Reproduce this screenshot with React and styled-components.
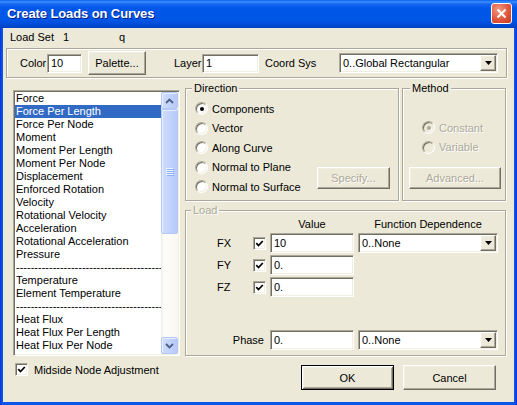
import styled, { createGlobalStyle, css } from 'styled-components';

const FACE = '#ECE9D8';
const GRAY = '#ACA899';

const GlobalStyle = createGlobalStyle`
  * { box-sizing: border-box; }
  html, body { margin: 0; padding: 0; background: #fff; }
  body {
    font-family: "Liberation Sans", Arial, sans-serif;
    font-size: 11px;
    color: #000;
  }
`;

const sunken = css`
  border: 1px solid;
  border-color: ${GRAY} #fff #fff ${GRAY};
  box-shadow: inset 1px 1px 0 #716F64, inset -1px -1px 0 #F1EFE2;
`;

const raised = css`
  border: 1px solid;
  border-color: #fff #716F64 #716F64 #fff;
  box-shadow: inset -1px -1px 0 ${GRAY}, inset 1px 1px 0 #F1EFE2;
  background: ${FACE};
`;

const etched = css`
  border: 1px solid ${GRAY};
  box-shadow: inset 1px 1px 0 #fff, 1px 1px 0 #fff;
`;

const disabledText = css`
  color: ${GRAY};
  text-shadow: 1px 1px 0 #fff;
`;

const Window = styled.div`
  width: 517px;
  height: 405px;
  display: flex;
  flex-direction: column;
  background: linear-gradient(to right, #0831D9, #0B55E8 2px, #0B55E8 calc(100% - 2px), #0831D9);
`;

const TitleBar = styled.div`
  height: 28px;
  flex: none;
  display: flex;
  align-items: center;
  justify-content: space-between;
  padding: 0 5px 1px 7px;
  background: linear-gradient(to bottom, #0A5DF6 0%, #3D8FFA 7%, #1466F2 14%, #0058E8 30%, #0056E6 70%, #004CD6 88%, #003EBE 100%);
  color: #fff;
  font: bold 13px "Liberation Sans", Arial, sans-serif;
  letter-spacing: -0.1px;
  text-shadow: 1px 1px 0 #0A1E82;
`;

const CloseButton = styled.div`
  width: 21px;
  height: 21px;
  border: 1px solid #fff;
  border-radius: 3px;
  background: radial-gradient(circle at 35% 30%, #F09A83 0%, #E0563C 55%, #C8391E 100%);
  display: flex;
  align-items: center;
  justify-content: center;
`;

const Client = styled.div`
  flex: 1;
  margin: 0 3px 3px;
  padding-top: 1px;
  background: ${FACE};
  display: flex;
  flex-direction: column;
`;

const LoadSetRow = styled.div`
  height: 15px;
  padding-left: 7px;
  display: flex;
  align-items: center;
`;

const Cell = styled.span`
  width: ${({ $w }) => ($w ? `${$w}px` : 'auto')};
  flex: none;
  white-space: nowrap;
`;

const ToolGroup = styled.div`
  ${etched};
  margin: 4px 0 0 3px;
  width: 501px;
  height: 30px;
  display: flex;
  align-items: center;
  padding-left: 13px;
`;

const FieldLabel = styled.span`
  width: ${({ $w }) => $w}px;
  margin-left: ${({ $ml }) => $ml || 0}px;
  flex: none;
  white-space: nowrap;
`;

const TextInput = styled.input`
  ${sunken};
  width: ${({ $w }) => $w}px;
  height: ${({ $h }) => $h || 20}px;
  padding: 0 2px 0 3px;
  margin: 0;
  background: #fff;
  font: 11px "Liberation Sans", Arial, sans-serif;
  color: #000;
  outline: none;
`;

const Button = styled.div`
  ${raised};
  width: ${({ $w }) => $w}px;
  height: ${({ $h }) => $h || 23}px;
  margin-left: ${({ $ml }) => $ml || 0}px;
  flex: none;
  display: flex;
  align-items: center;
  justify-content: center;
  ${({ $disabled }) => $disabled && disabledText};
  ${({ $default }) =>
    $default &&
    css`
      border: 1px solid #000;
      box-shadow: inset 1px 1px 0 #fff, inset -1px -1px 0 #716F64, inset 2px 2px 0 #F1EFE2,
        inset -2px -2px 0 ${GRAY};
    `};
`;

const Combo = styled.div`
  ${sunken};
  width: ${({ $w }) => $w}px;
  height: 20px;
  padding: 1px;
  background: #fff;
  display: flex;
  align-items: center;
  flex: none;
`;

const ComboText = styled.span`
  flex: 1;
  padding-left: 2px;
  white-space: nowrap;
  overflow: hidden;
`;

const ComboArrow = styled.div`
  ${raised};
  width: 16px;
  height: 16px;
  display: flex;
  align-items: center;
  justify-content: center;
`;

const Main = styled.div`
  display: flex;
  gap: 5px;
  margin: 10px 0 0 10px;
`;

const LeftColumn = styled.div`
  width: 167px;
  padding-top: 2px;
  display: flex;
  flex-direction: column;
`;

const ListBox = styled.div`
  ${sunken};
  height: 266px;
  padding: 1px;
  background: #fff;
  display: flex;
`;

const Items = styled.div`
  flex: 1;
  overflow: hidden;
`;

const Item = styled.div`
  height: 13px;
  line-height: 13px;
  padding-left: 1px;
  white-space: nowrap;
  overflow: hidden;
  ${({ $selected }) =>
    $selected &&
    css`
      background: #316AC5;
      color: #fff;
    `};
`;

const Scrollbar = styled.div`
  width: 17px;
  display: flex;
  flex-direction: column;
  background: linear-gradient(to right, #EEEDE5, #FDFDFA 3px, #F8F7F2);
`;

const scrollPart = css`
  border: 1px solid #B4C8F6;
  border-radius: 2px;
  background: linear-gradient(to right, #CFDCFD, #C0D1FC 60%, #B5C8F7);
  box-shadow: inset 1px 1px 0 #E6EEFE;
`;

const ScrollButton = styled.div`
  ${scrollPart};
  height: 17px;
  flex: none;
  display: flex;
  align-items: center;
  justify-content: center;
`;

const Thumb = styled.div`
  ${scrollPart};
  height: 125px;
  flex: none;
  display: flex;
  flex-direction: column;
  align-items: center;
  justify-content: center;
  gap: 1px;
`;

const Grip = styled.div`
  width: 7px;
  height: 1px;
  background: #EEF4FE;
  box-shadow: 1px 1px 0 #8CB0F8;
`;

const Track = styled.div`
  flex: 1;
`;

const CheckRow = styled.div`
  display: flex;
  align-items: center;
  gap: 6px;
  margin: 7px 0 0 2px;
  white-space: nowrap;
`;

const CheckBox = styled.span`
  ${sunken};
  width: 13px;
  height: 13px;
  background: #fff;
  flex: none;
  display: flex;
  align-items: center;
  justify-content: center;
`;

const RightColumn = styled.div`
  width: 321px;
  display: flex;
  flex-direction: column;
`;

const TopGroups = styled.div`
  display: flex;
  gap: 3px;
`;

const GroupBox = styled.div`
  ${etched};
  position: relative;
  width: ${({ $w }) => ($w ? `${$w}px` : 'auto')};
  height: ${({ $h }) => $h}px;
  margin-top: ${({ $mt }) => $mt || 0}px;
  display: flex;
  flex-direction: ${({ $column }) => ($column ? 'column' : 'row')};
`;

const Caption = styled.span`
  position: absolute;
  top: -7px;
  left: ${({ $left }) => $left || 6}px;
  padding: 0 2px;
  line-height: 13px;
  background: ${FACE};
  ${({ $disabled }) => $disabled && disabledText};
`;

const DirectionBody = styled.div`
  flex: 1;
  display: flex;
  padding: 10px 8px 11px 9px;
`;

const RadioList = styled.div`
  display: flex;
  flex-direction: column;
`;

const RadioRow = styled.div`
  height: 19.5px;
  flex: none;
  display: flex;
  align-items: center;
  gap: 4px;
  padding-left: ${({ $indent }) => $indent || 0}px;
  white-space: nowrap;
  ${({ $disabled }) => $disabled && disabledText};
`;

const Radio = styled.span`
  width: 13px;
  height: 13px;
  border-radius: 50%;
  border: 1px solid;
  border-color: ${GRAY} #fff #fff ${GRAY};
  box-shadow: inset 1px 1px 0 #716F64, inset -1px -1px 0 #F1EFE2;
  background: ${({ $disabled }) => ($disabled ? FACE : '#fff')};
  flex: none;
  display: flex;
  align-items: center;
  justify-content: center;
  &::after {
    content: '';
    display: ${({ $checked }) => ($checked ? 'block' : 'none')};
    width: 4px;
    height: 4px;
    border-radius: 50%;
    background: ${({ $disabled }) => ($disabled ? GRAY : '#000')};
    box-shadow: ${({ $disabled }) => ($disabled ? '1px 1px 0 #fff' : 'none')};
  }
`;

const SideButton = styled(Button)`
  align-self: flex-end;
  margin-left: auto;
`;

const BottomButton = styled(Button)`
  margin-top: auto;
`;

const MethodBody = styled.div`
  flex: 1;
  display: flex;
  flex-direction: column;
  padding: 29px 0 11px 6px;
`;

const LoadBody = styled.div`
  flex: 1;
  display: flex;
  flex-direction: column;
  padding: 7px 0 5px;
`;

const LoadGrid = styled.div`
  display: grid;
  grid-template-columns: 63px 13px 84px 140px;
  grid-template-rows: ${({ $rows }) => $rows};
  column-gap: 4px;
  row-gap: 2px;
  align-items: center;
  margin-top: ${({ $pushDown }) => ($pushDown ? 'auto' : '0')};
`;

const Header = styled.span`
  grid-column: ${({ $col }) => $col};
  justify-self: center;
  line-height: 13px;
  white-space: nowrap;
`;

const AxisLabel = styled.span`
  grid-column: 1;
  justify-self: start;
  margin-left: 31px;
`;

const PhaseLabel = styled.span`
  grid-column: 1 / span 2;
  justify-self: end;
  margin-right: 2px;
`;

const ActionRow = styled.div`
  display: flex;
  justify-content: flex-end;
  gap: 9px;
  margin-top: 9px;
  padding-right: 10px;
`;

const CheckMark = () => (
  <svg width="9" height="9" viewBox="0 0 9 9">
    <path d="M1.3 4.2 L3.5 6.5 L7.8 2" fill="none" stroke="#000" strokeWidth="1.8" />
  </svg>
);

const DownTriangle = () => (
  <svg width="7" height="4" viewBox="0 0 7 4">
    <polygon points="0,0 7,0 3.5,4" fill="#000" />
  </svg>
);

const Chevron = ({ up }) => (
  <svg width="9" height="6" viewBox="0 0 9 6">
    <path
      d={up ? 'M1 5 L4.5 1.5 L8 5' : 'M1 1 L4.5 4.5 L8 1'}
      fill="none"
      stroke="#4D6185"
      strokeWidth="1.8"
    />
  </svg>
);

const SEP = '-'.repeat(60);

const loadTypes = [
  'Force',
  'Force Per Length',
  'Force Per Node',
  'Moment',
  'Moment Per Length',
  'Moment Per Node',
  'Displacement',
  'Enforced Rotation',
  'Velocity',
  'Rotational Velocity',
  'Acceleration',
  'Rotational Acceleration',
  'Pressure',
  SEP,
  'Temperature',
  'Element Temperature',
  SEP,
  'Heat Flux',
  'Heat Flux Per Length',
  'Heat Flux Per Node',
  'Heat Generation',
];

const directions = ['Components', 'Vector', 'Along Curve', 'Normal to Plane', 'Normal to Surface'];

function ComboBox({ width, value }) {
  return (
    <Combo $w={width}>
      <ComboText>{value}</ComboText>
      <ComboArrow>
        <DownTriangle />
      </ComboArrow>
    </Combo>
  );
}

function App() {
  return (
    <>
      <GlobalStyle />
      <Window>
        <TitleBar>
          <span>Create Loads on Curves</span>
          <CloseButton>
            <svg width="11" height="11" viewBox="0 0 11 11">
              <path d="M1.5 1.5 L9.5 9.5 M9.5 1.5 L1.5 9.5" stroke="#fff" strokeWidth="2" />
            </svg>
          </CloseButton>
        </TitleBar>
        <Client>
          <LoadSetRow>
            <Cell $w={53}>Load Set</Cell>
            <Cell $w={56}>1</Cell>
            <Cell>q</Cell>
          </LoadSetRow>

          <ToolGroup>
            <FieldLabel $w={27}>Color</FieldLabel>
            <TextInput $w={35} $h={19} defaultValue="10" />
            <Button $w={58} $h={24} $ml={6}>Palette...</Button>
            <FieldLabel $w={28} $ml={28}>Layer</FieldLabel>
            <TextInput $w={57} $h={19} defaultValue="1" />
            <FieldLabel $w={74} $ml={6}>Coord Sys</FieldLabel>
            <ComboBox width={159} value="0..Global Rectangular" />
          </ToolGroup>

          <Main>
            <LeftColumn>
              <ListBox>
                <Items>
                  {loadTypes.map((t, i) => (
                    <Item key={i} $selected={i === 1}>{t}</Item>
                  ))}
                </Items>
                <Scrollbar>
                  <ScrollButton>
                    <Chevron up />
                  </ScrollButton>
                  <Thumb>
                    <Grip />
                    <Grip />
                    <Grip />
                    <Grip />
                  </Thumb>
                  <Track />
                  <ScrollButton>
                    <Chevron />
                  </ScrollButton>
                </Scrollbar>
              </ListBox>
              <CheckRow>
                <CheckBox>
                  <CheckMark />
                </CheckBox>
                <span>Midside Node Adjustment</span>
              </CheckRow>
            </LeftColumn>

            <RightColumn>
              <TopGroups>
                <GroupBox $w={214} $h={113}>
                  <Caption $left={6}>Direction</Caption>
                  <DirectionBody>
                    <RadioList>
                      {directions.map((d, i) => (
                        <RadioRow key={d}>
                          <Radio $checked={i === 0} />
                          {d}
                        </RadioRow>
                      ))}
                    </RadioList>
                    <SideButton $w={73} $h={22} $disabled>Specify...</SideButton>
                  </DirectionBody>
                </GroupBox>
                <GroupBox $w={104} $h={113}>
                  <Caption $left={7}>Method</Caption>
                  <MethodBody>
                    <RadioRow $indent={13} $disabled>
                      <Radio $checked $disabled />
                      Constant
                    </RadioRow>
                    <RadioRow $indent={13} $disabled>
                      <Radio $disabled />
                      Variable
                    </RadioRow>
                    <BottomButton $w={92} $h={22} $disabled>Advanced...</BottomButton>
                  </MethodBody>
                </GroupBox>
              </TopGroups>

              <GroupBox $h={146} $mt={9} $column>
                <Caption $left={5} $disabled>Load</Caption>
                <LoadBody>
                  <LoadGrid $rows="13px 20px 20px 20px">
                    <Header $col={3}>Value</Header>
                    <Header $col={4}>Function Dependence</Header>
                    <AxisLabel>FX</AxisLabel>
                    <CheckBox><CheckMark /></CheckBox>
                    <TextInput $w={84} defaultValue="10" />
                    <ComboBox width={140} value="0..None" />
                    <AxisLabel>FY</AxisLabel>
                    <CheckBox><CheckMark /></CheckBox>
                    <TextInput $w={84} defaultValue="0." />
                    <span />
                    <AxisLabel>FZ</AxisLabel>
                    <CheckBox><CheckMark /></CheckBox>
                    <TextInput $w={84} defaultValue="0." />
                    <span />
                  </LoadGrid>
                  <LoadGrid $rows="20px" $pushDown>
                    <PhaseLabel>Phase</PhaseLabel>
                    <TextInput $w={84} defaultValue="0." />
                    <ComboBox width={140} value="0..None" />
                  </LoadGrid>
                </LoadBody>
              </GroupBox>

              <ActionRow>
                <Button $w={93} $h={25} $default>OK</Button>
                <Button $w={93} $h={25}>Cancel</Button>
              </ActionRow>
            </RightColumn>
          </Main>
        </Client>
      </Window>
    </>
  );
}

export default App;
